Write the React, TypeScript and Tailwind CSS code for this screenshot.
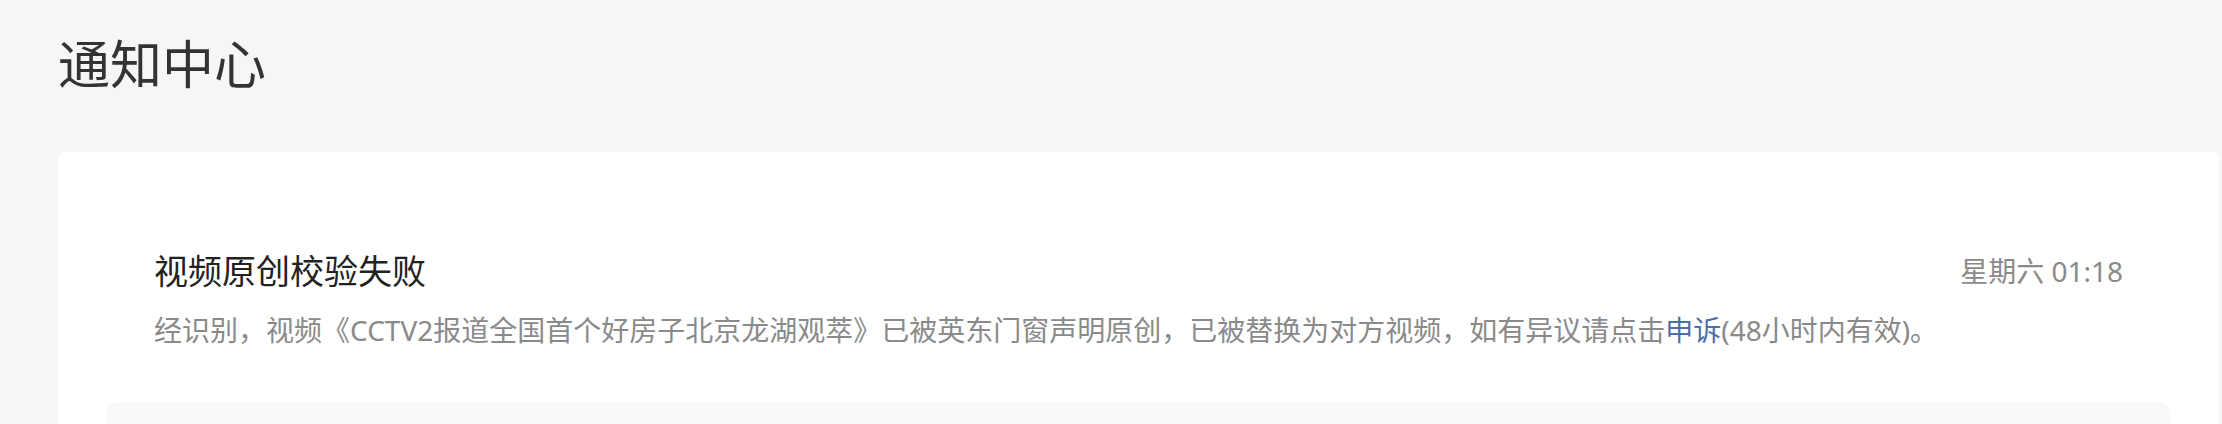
import React from 'react';

// Notification center page: header + card with notification list
interface Notice {
    title: string;
    time: string;
    before: string;
    link: string;
    after: string;
}

const notice: Notice = {
    title: '视频原创校验失败',
    time: '星期六 01:18',
    before: '经识别，视频《CCTV2报道全国首个好房子北京龙湖观萃》已被英东门窗声明原创，已被替换为对方视频，如有异议请点击',
    link: '申诉',
    after: '(48小时内有效)。',
};

function NoticeItem({ notice }: { notice: Notice }) {
    return (
        <div className="px-12 pt-[48px] pb-[50px] rounded-[14px] bg-white">
            {/* Title row */}
            <div className="flex items-center justify-between h-[46px]">
                <span className="text-[34px] leading-[46px] text-[#222]">{notice.title}</span>
                <span className="text-[28px] leading-[46px] text-[#8a8a8a]">{notice.time}</span>
            </div>
            {/* Body */}
            <p className="mt-[14px] text-[28px] leading-[44px] text-[#8a8a8a]">
                {notice.before}
                <span className="text-[#4e6ea8] cursor-pointer">{notice.link}</span>
                {notice.after}
            </p>
        </div>
    );
}

export default function App() {
    return (
        <div
            className="min-h-screen bg-[#f5f6f8] pl-[58px] pr-[3px] pt-[32px]"
            style={{ fontFamily: '"Noto Sans", "Noto Sans CJK SC", sans-serif' }}
        >
            <h1 className="text-[52px] leading-[64px] text-[#333] font-normal">通知中心</h1>

            <div className="mt-[56px] bg-white rounded-md p-12 flex flex-col">
                <NoticeItem notice={notice} />
                <div className="h-[160px] rounded-[14px] bg-[#f9f9f9]" />
            </div>
        </div>
    );
}
